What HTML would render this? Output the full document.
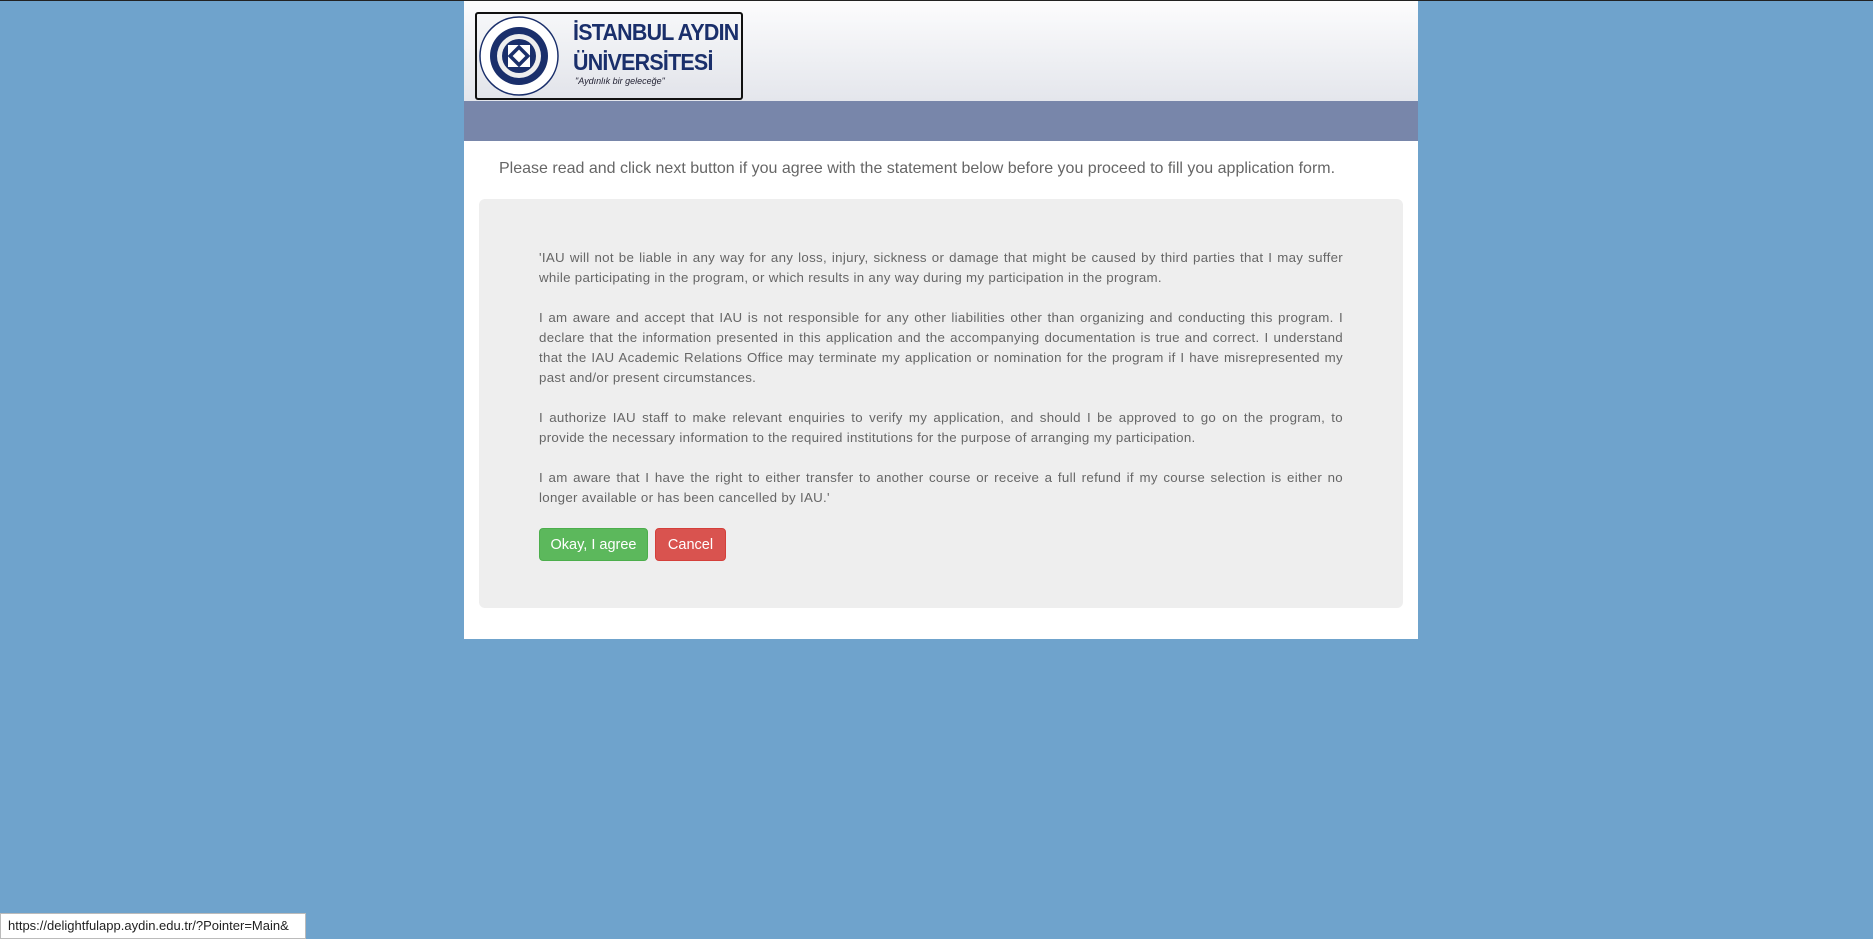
<!DOCTYPE html>
<html><head><meta charset="utf-8"><style>
html,body{margin:0;padding:0}
body{width:1873px;height:939px;background:#6fa3cc;position:relative;overflow:hidden;font-family:"Liberation Sans",Arial,sans-serif}
.topline{position:absolute;left:0;top:0;width:1873px;height:1px;background:#222}
.wrap{position:absolute;left:464px;top:1px;width:954px;height:638px;background:#fff}
.hdr{position:absolute;left:0;top:0;width:954px;height:100px;background:linear-gradient(#fcfcfd,#e4e6ec)}
.bar{position:absolute;left:0;top:100px;width:954px;height:40px;background:#7886aa}
.logo{position:absolute;left:11px;top:11px;width:268px;height:88px;border:2px solid #111;border-radius:3px;box-sizing:border-box;background:linear-gradient(#f6f7f9,#e2e4ea);overflow:hidden}
.t1{position:absolute;left:96px;top:3px;font-size:23px;font-weight:bold;color:#1a2f6b;letter-spacing:-0.8px;white-space:nowrap;line-height:30px;transform:scaleX(0.93);transform-origin:left}
.t3{position:absolute;left:98px;top:62px;font-size:9px;font-style:italic;color:#223;}
.intro{position:absolute;left:35px;top:159px;font-size:16px;color:#666}
.panel{position:absolute;left:15px;top:198px;width:924px;height:409px;background:#eee;border-radius:6px}
.txt{position:absolute;left:75px;top:247px;width:804px;font-size:13.3px;letter-spacing:0.3px;line-height:20px;color:#666;text-align:justify}
.txt p{margin:0 0 20px}
.btn{position:absolute;top:527px;height:33px;border-radius:4px;color:#fff;font-size:14.5px;line-height:33px;text-align:center;box-sizing:border-box}
.ok{left:75px;width:109px;background:#5cb85c;border:1px solid #4cae4c}
.cn{left:191px;width:71px;background:#d9534f;border:1px solid #d43f3a}
.status{position:absolute;left:0;top:913px;width:306px;height:26px;background:#fff;border:1px solid #bbb;box-sizing:border-box;font-size:13px;line-height:24px;padding-left:7px;color:#222}
</style></head><body>
<div class="topline"></div>
<div class="wrap">
<div class="hdr"></div>
<div class="bar"></div>
<div class="logo">
<svg style="position:absolute;left:1px;top:1px" width="82" height="82" viewBox="0 0 82 82">
<circle cx="41" cy="41" r="39" fill="#fff" stroke="#1a2f6b" stroke-width="1.5"/>
<circle cx="41" cy="41" r="29" fill="#1a2f6b"/>
<circle cx="41" cy="41" r="22" fill="#eee"/>
<circle cx="41" cy="41" r="17" fill="#1a2f6b"/>
<rect x="30" y="30" width="22" height="22" fill="#fff"/>
<rect x="33" y="33" width="16" height="16" fill="#1a2f6b" transform="rotate(45 41 41)"/>
<rect x="36.5" y="36.5" width="9" height="9" fill="#fff" transform="rotate(45 41 41)"/>
</svg>
<div class="t1">İSTANBUL AYDIN<br>ÜNİVERSİTESİ</div>
<div class="t3">"Aydınlık bir geleceğe"</div>
</div>
<div class="intro">Please read and click next button if you agree with the statement below before you proceed to fill you application form.</div>
<div class="panel">
</div>
<div class="txt">
<p>'IAU will not be liable in any way for any loss, injury, sickness or damage that might be caused by third parties that I may suffer while participating in the program, or which results in any way during my participation in the program.</p>
<p>I am aware and accept that IAU is not responsible for any other liabilities other than organizing and conducting this program. I declare that the information presented in this application and the accompanying documentation is true and correct. I understand that the IAU Academic Relations Office may terminate my application or nomination for the program if I have misrepresented my past and/or present circumstances.</p>
<p>I authorize IAU staff to make relevant enquiries to verify my application, and should I be approved to go on the program, to provide the necessary information to the required institutions for the purpose of arranging my participation.</p>
<p>I am aware that I have the right to either transfer to another course or receive a full refund if my course selection is either no longer available or has been cancelled by IAU.'</p>
</div>
<div class="btn ok">Okay, I agree</div>
<div class="btn cn">Cancel</div>
</div>
<div class="status">https://delightfulapp.aydin.edu.tr/?Pointer=Main&amp;</div>
</body></html>
